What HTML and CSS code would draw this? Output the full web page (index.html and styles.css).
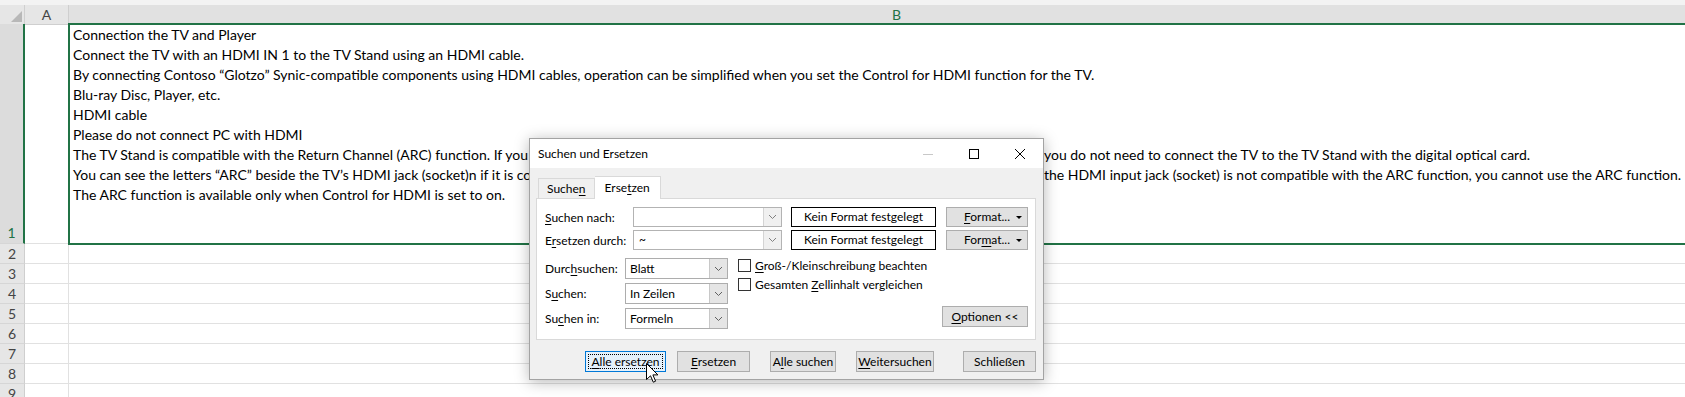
FILE: index.html
```html
<!DOCTYPE html>
<html lang="de">
<head>
  <meta charset="UTF-8">
  <title>Suchen und Ersetzen</title>
  <link rel="stylesheet" href="styles.css">
</head>
<body>
  <!-- Worksheet -->
  <div class="sheet">
    <div class="top-strip"></div>
    <div class="grid-row head-row">
      <div class="corner"><span class="corner-tri"></span></div>
      <div class="col-head">A</div>
      <div class="col-head sel">B</div>
    </div>
    <div class="grid-row row-tall">
      <div class="row-head sel">1</div>
      <div class="cell"></div>
      <div class="cell active">
        <div>Connection the TV and Player</div>
        <div>Connect the TV with an HDMI IN 1 to the TV Stand using an HDMI cable.</div>
        <div>By connecting Contoso “Glotzo” Synic-compatible components using HDMI cables, operation can be simplified when you set the Control for HDMI function for the TV.</div>
        <div>Blu-ray Disc, Player, etc.</div>
        <div>HDMI cable</div>
        <div>Please do not connect PC with HDMI</div>
        <div>The TV Stand is compatible with the Return Channel (ARC) function. If you connect the TV to the HDMI IN jack that is compatible with the ARC function, then you do not need to connect the TV to the TV Stand with the digital optical card.</div>
        <div>You can see the letters “ARC” beside the TV’s HDMI jack (socket)n if it is compatible with the ARC function. If there are no such markings on the TV’s jack, or if the HDMI input jack (socket) is not compatible with the ARC function, you cannot use the ARC function.</div>
        <div>The ARC function is available only when Control for HDMI is set to on.</div>
      </div>
    </div>
    <div class="grid-row"><div class="row-head">2</div><div class="cell"></div><div class="cell"></div></div>
    <div class="grid-row"><div class="row-head">3</div><div class="cell"></div><div class="cell"></div></div>
    <div class="grid-row"><div class="row-head">4</div><div class="cell"></div><div class="cell"></div></div>
    <div class="grid-row"><div class="row-head">5</div><div class="cell"></div><div class="cell"></div></div>
    <div class="grid-row"><div class="row-head">6</div><div class="cell"></div><div class="cell"></div></div>
    <div class="grid-row"><div class="row-head">7</div><div class="cell"></div><div class="cell"></div></div>
    <div class="grid-row"><div class="row-head">8</div><div class="cell"></div><div class="cell"></div></div>
    <div class="grid-row"><div class="row-head">9</div><div class="cell"></div><div class="cell"></div></div>
  </div>

  <!-- Find & Replace dialog -->
  <div class="dialog">
    <div class="titlebar">
      <span class="title">Suchen und Ersetzen</span>
      <div class="win-btn">
        <svg width="10" height="10" viewBox="0 0 10 10"><line x1="0" y1="5.5" x2="10" y2="5.5" stroke="#c8c8c8" stroke-width="1"/></svg>
      </div>
      <div class="win-btn">
        <svg width="10" height="10" viewBox="0 0 10 10"><rect x="0.5" y="0.5" width="9" height="9" fill="none" stroke="#000" stroke-width="1"/></svg>
      </div>
      <div class="win-btn">
        <svg width="10" height="10" viewBox="0 0 10 10"><path d="M0 0 L10 10 M10 0 L0 10" stroke="#000" stroke-width="1"/></svg>
      </div>
    </div>

    <div class="dlg-body">
      <div class="tabs">
        <div class="tab">Suche<u>n</u></div>
        <div class="tab active">Erse<u>t</u>zen</div>
      </div>

      <div class="panel">
        <div class="find-row">
          <span class="lbl"><u>S</u>uchen nach:</span>
          <div class="combo">
            <span class="combo-val"></span>
            <span class="combo-btn"><svg width="7" height="4" viewBox="0 0 7 4"><polyline points="0,0 3.5,3.5 7,0" fill="none" stroke="#808080" stroke-width="1"/></svg></span>
          </div>
          <div class="fmt-none">Kein Format festgelegt</div>
          <div class="btn fmt-btn"><span><u>F</u>ormat...</span><span class="caret"></span></div>
        </div>
        <div class="find-row">
          <span class="lbl">E<u>r</u>setzen durch:</span>
          <div class="combo">
            <span class="combo-val">~</span>
            <span class="combo-btn"><svg width="7" height="4" viewBox="0 0 7 4"><polyline points="0,0 3.5,3.5 7,0" fill="none" stroke="#808080" stroke-width="1"/></svg></span>
          </div>
          <div class="fmt-none">Kein Format festgelegt</div>
          <div class="btn fmt-btn"><span>For<u>m</u>at...</span><span class="caret"></span></div>
        </div>

        <div class="opts">
          <div class="opt-left">
            <div class="opt-row">
              <span class="lbl short">Durc<u>h</u>suchen:</span>
              <div class="select"><span class="select-val">Blatt</span><span class="select-btn"><svg width="7" height="4" viewBox="0 0 7 4"><polyline points="0,0 3.5,3.5 7,0" fill="none" stroke="#606060" stroke-width="1"/></svg></span></div>
            </div>
            <div class="opt-row">
              <span class="lbl short">S<u>u</u>chen:</span>
              <div class="select"><span class="select-val">In Zeilen</span><span class="select-btn"><svg width="7" height="4" viewBox="0 0 7 4"><polyline points="0,0 3.5,3.5 7,0" fill="none" stroke="#606060" stroke-width="1"/></svg></span></div>
            </div>
            <div class="opt-row">
              <span class="lbl short">Su<u>c</u>hen in:</span>
              <div class="select"><span class="select-val">Formeln</span><span class="select-btn"><svg width="7" height="4" viewBox="0 0 7 4"><polyline points="0,0 3.5,3.5 7,0" fill="none" stroke="#606060" stroke-width="1"/></svg></span></div>
            </div>
          </div>
          <div class="opt-right">
            <div class="check-row"><span class="checkbox"></span><span><u>G</u>roß-/Kleinschreibung beachten</span></div>
            <div class="check-row"><span class="checkbox"></span><span>Gesamten <u>Z</u>ellinhalt vergleichen</span></div>
            <div class="btn opt-btn"><u>O</u>ptionen &lt;&lt;</div>
          </div>
        </div>
      </div>

      <div class="actions">
        <div class="btn act default"><span class="focus"><u>A</u>lle ersetzen</span></div>
        <div class="btn act w-ers"><u>E</u>rsetzen</div>
        <div class="btn act w-alle">A<u>l</u>le suchen</div>
        <div class="btn act w-weiter"><u>W</u>eitersuchen</div>
        <div class="btn act w-close">Schließen</div>
      </div>
    </div>
  </div>

  <!-- Mouse pointer over "Alle ersetzen" -->
  <svg class="pointer" width="13" height="21" viewBox="0 0 13 21">
    <path d="M0.5 0.5 L0.5 16.5 L4.5 12.8 L7.3 19.2 L9.6 18.2 L6.9 11.9 L11.9 11.9 Z" fill="#fff" stroke="#000" stroke-width="1" stroke-linejoin="miter"/>
  </svg>
</body>
</html>
```

FILE: styles.css
```css
/* Base */
* { box-sizing: border-box; }
html, body { margin: 0; }
body {
  width: 1685px;
  height: 397px;
  overflow: hidden;
  background: #fff;
  font-family: 'Lato', 'Liberation Sans', sans-serif;
  position: relative;
}
u { text-decoration: underline; text-underline-offset: 2px; }

/* Worksheet */
.sheet { overflow: hidden; }
.top-strip { height: 5px; background: #f3f3f3; }
.grid-row {
  display: grid;
  grid-template-columns: 25px 44px 1656px;
  height: 20px;
}
.head-row { height: 19px; }
.row-tall { height: 220px; }
.corner {
  background: #e6e6e6;
  border-right: 1px solid #cfcfcf;
  border-bottom: 1px solid #cfcfcf;
  display: flex;
  align-items: flex-end;
  justify-content: flex-end;
  padding: 0 2px 2px 0;
}
.corner-tri {
  width: 0;
  height: 0;
  border-left: 11px solid transparent;
  border-bottom: 11px solid #b8b8b8;
}
.col-head {
  background: #e6e6e6;
  border-right: 1px solid #cfcfcf;
  border-bottom: 1px solid #cfcfcf;
  text-align: center;
  font-size: 14px;
  line-height: 19px;
  color: #444;
}
.col-head.sel { background: #e1e1e1; color: #217346; }
.row-head {
  background: #e6e6e6;
  border-right: 1px solid #cfcfcf;
  border-bottom: 1px solid #d6d6d6;
  display: flex;
  align-items: flex-end;
  justify-content: center;
  font-size: 14px;
  line-height: 19px;
  color: #444;
}
.row-head.sel {
  background: #dcdcdc;
  color: #217346;
  border-right: 2px solid #217346;
  padding-bottom: 1px;
}
.cell {
  border-right: 1px solid #e1e1e1;
  border-bottom: 1px solid #e1e1e1;
}
.cell.active {
  border: 2px solid #217346;
  margin: -1px 0 -1px -1px;
  padding: 0 3px;
  font-size: 14px;
  line-height: 20px;
  color: #000;
  white-space: nowrap;
  position: relative;
  z-index: 1;
}

/* Dialog window */
.dialog {
  position: absolute;
  left: 529px;
  top: 138px;
  width: 515px;
  height: 242px;
  background: #f0f0f0;
  border: 1px solid #a3a3a3;
  box-shadow: 0 2px 14px rgba(0, 0, 0, 0.28);
  font-family: 'Lato', 'Liberation Sans', sans-serif;
  font-size: 12px;
  color: #000;
  z-index: 5;
}
.titlebar {
  height: 29px;
  background: #fff;
  display: flex;
  align-items: center;
  padding-left: 8px;
}
.title { flex: 1; font-size: 12px; }
.win-btn {
  width: 46px;
  height: 29px;
  display: flex;
  align-items: center;
  justify-content: center;
}
.dlg-body { padding: 8px 7px 0 6px; }

/* Tabs */
.tabs {
  display: flex;
  align-items: flex-end;
  height: 22px;
  padding-left: 2px;
}
.tab {
  height: 20px;
  padding: 0 8px;
  line-height: 19px;
  border: 1px solid #d9d9d9;
  border-bottom: none;
  background: #f0f0f0;
}
.tab.active {
  height: 23px;
  margin-bottom: -1px;
  padding: 0 10px;
  line-height: 21px;
  background: #fff;
  border-left: none;
  position: relative;
  z-index: 1;
}
.panel {
  width: 500px;
  height: 142px;
  background: #fff;
  border: 1px solid #d9d9d9;
  padding: 8px 7px 0 8px;
}

/* Find / replace rows */
.find-row {
  display: flex;
  align-items: center;
  height: 20px;
  margin-bottom: 3px;
}
.lbl { width: 88px; }
.lbl.short { width: 80px; }
.combo {
  width: 149px;
  height: 20px;
  border: 1px solid #b3b3b3;
  display: flex;
}
.combo-val { flex: 1; padding-left: 5px; line-height: 18px; }
.combo-btn {
  width: 18px;
  border-left: 1px solid #d4d4d4;
  background: #f0f0f0;
  display: flex;
  align-items: center;
  justify-content: center;
}
.fmt-none {
  width: 145px;
  height: 20px;
  margin-left: 9px;
  border: 1px solid #000;
  text-align: center;
  line-height: 18px;
}
.btn {
  background: #e1e1e1;
  border: 1px solid #adadad;
  height: 21px;
  line-height: 19px;
  text-align: center;
}
.fmt-btn {
  width: 82px;
  height: 20px;
  margin-left: 10px;
  display: flex;
  align-items: center;
  padding: 0 5px 0 17px;
  line-height: 18px;
}
.caret {
  margin-left: auto;
  width: 0;
  height: 0;
  border-left: 3px solid transparent;
  border-right: 3px solid transparent;
  border-top: 3px solid #000;
}

/* Options */
.opts { display: flex; margin-top: 8px; }
.opt-row {
  display: flex;
  align-items: center;
  height: 21px;
  margin-bottom: 4px;
}
.select {
  width: 103px;
  height: 21px;
  border: 1px solid #adadad;
  display: flex;
}
.select-val { flex: 1; padding-left: 4px; line-height: 19px; }
.select-btn {
  width: 18px;
  background: #e5e5e5;
  border-left: 1px solid #c8c8c8;
  display: flex;
  align-items: center;
  justify-content: center;
}
.opt-right {
  flex: 1;
  margin-left: 10px;
  margin-top: -2px;
  display: flex;
  flex-direction: column;
}
.check-row {
  display: flex;
  align-items: center;
  height: 19px;
}
.checkbox {
  width: 13px;
  height: 13px;
  border: 1px solid #333;
  background: #fff;
  margin-right: 4px;
}
.opt-btn {
  align-self: flex-end;
  width: 86px;
  margin-top: 12px;
}

/* Bottom buttons */
.actions {
  display: flex;
  margin-top: 11px;
  padding-left: 49px;
}
.act { width: 73px; }
.act.default {
  width: 81px;
  background: #e5f1fb;
  border-color: #0078d7;
  padding: 2px;
}
.focus {
  display: block;
  height: 15px;
  line-height: 13px;
  border: 1px dotted #000;
}
.w-ers { margin-left: 11px; }
.w-alle { width: 66px; margin-left: 20px; }
.w-weiter { width: 78px; margin-left: 20px; }
.w-close { margin-left: 29px; }

.pointer {
  position: absolute;
  left: 646px;
  top: 363px;
  z-index: 10;
}
```
